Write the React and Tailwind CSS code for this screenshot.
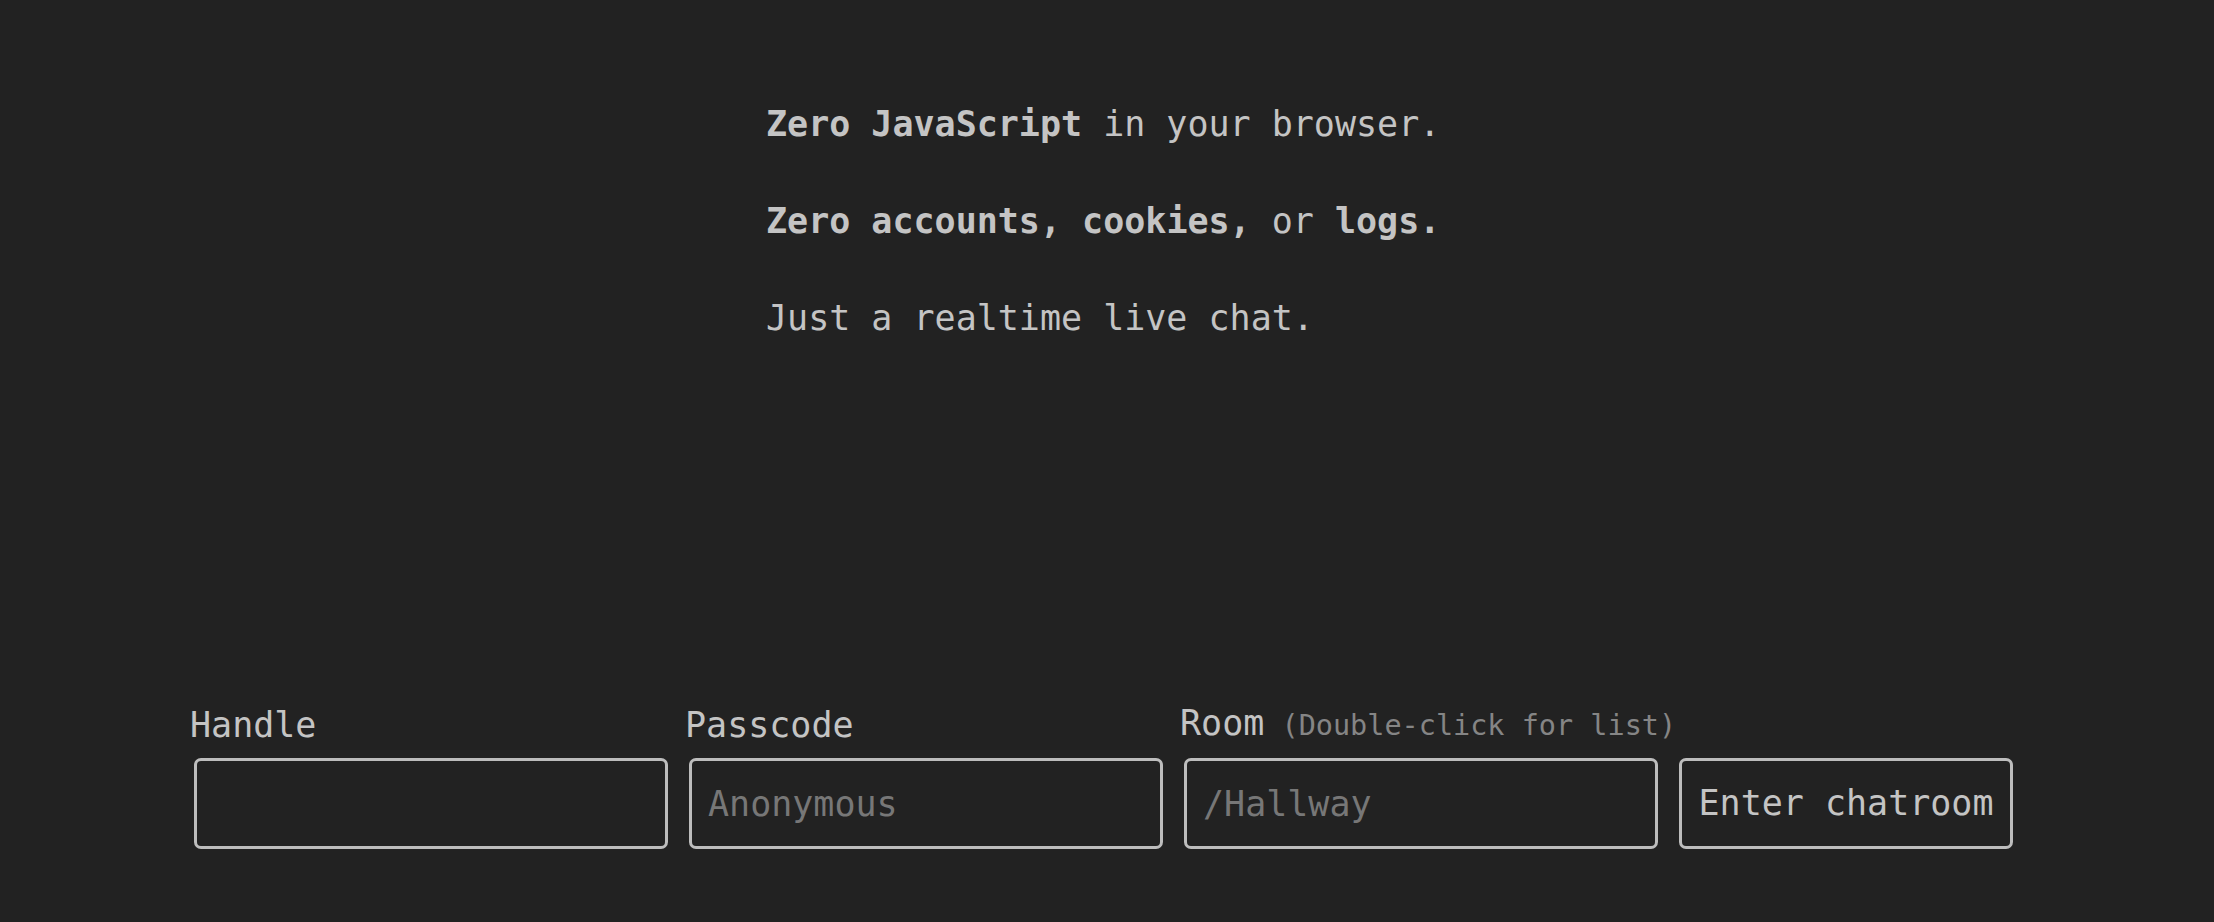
const mono = { fontFamily: "'DejaVu Sans Mono', monospace" };

const Field = ({ label, hint, placeholder }) => (
  <div className="flex flex-col w-[478px] shrink-0">
    <label className="text-[35px] leading-[41px] text-[#c4c4c4] whitespace-pre">
      {label}
      {hint && <span className="text-[28.5px] text-[#858585]"> {hint}</span>}
    </label>
    <input
      type="text"
      placeholder={placeholder}
      className="ml-[4px] mt-[12px] w-[474px] h-[91px] px-[16px] bg-transparent border-[3px] border-[#bdbdbd] rounded-[7px] text-[35px] text-[#c4c4c4] placeholder:text-[#777777] outline-none"
      style={mono}
    />
  </div>
);

export default function App() {
  return (
    <div className="h-[922px] w-full bg-[#222222] text-[#c4c4c4] flex flex-col" style={mono}>
      <div className="pt-[104px] pl-[766px] flex flex-col gap-[56px] text-[35px] leading-[41px]">
        <p>
          <b>Zero JavaScript</b> in your browser.
        </p>
        <p>
          <b>Zero accounts,</b> <b>cookies,</b> or <b>logs.</b>
        </p>
        <p>Just a realtime live chat.</p>
      </div>

      <form className="mt-auto mb-[73px] pl-[190px] flex items-end gap-[17px]">
        <Field label="Handle" placeholder="" />
        <Field label="Passcode" placeholder="Anonymous" />
        <Field label="Room" hint="(Double-click for list)" placeholder="/Hallway" />
        <button
          type="button"
          className="ml-[4px] w-[334px] h-[91px] border-[3px] border-[#bdbdbd] rounded-[7px] text-[35px] text-[#c4c4c4] bg-transparent"
          style={mono}
        >
          Enter chatroom
        </button>
      </form>
    </div>
  );
}
